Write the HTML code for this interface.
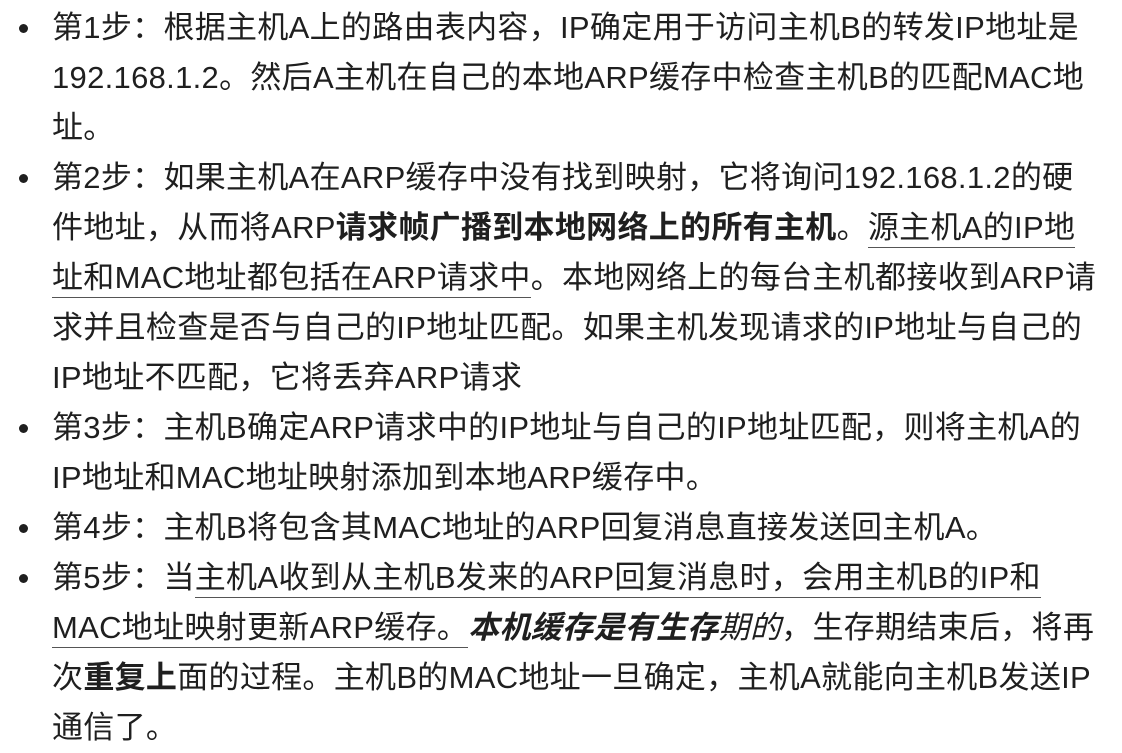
<!DOCTYPE html>
<html><head><meta charset="utf-8"><style>
body{margin:0;width:1122px;height:753px;background:#fff;overflow:hidden;position:relative;
font-family:"Liberation Sans","Noto Sans CJK SC",sans-serif;font-size:31px;letter-spacing:0.3px;color:#1f1f1f}
.l{position:absolute;left:52px;height:50px;line-height:50px;white-space:nowrap}
.b{position:absolute;left:19px;width:9px;height:9px;border-radius:50%;background:#1f1f1f}
u{text-decoration:none;border-bottom:1.5px solid #555;padding-bottom:2px}
b{font-weight:bold}
</style></head><body>
<div class="b" style="top:24px"></div>
<div class="l" style="top:3px">第1步：根据主机A上的路由表内容，IP确定用于访问主机B的转发IP地址是</div>
<div class="l" style="top:53px">192.168.1.2。然后A主机在自己的本地ARP缓存中检查主机B的匹配MAC地</div>
<div class="l" style="top:103px">址。</div>
<div class="b" style="top:174px"></div>
<div class="l" style="top:153px">第2步：如果主机A在ARP缓存中没有找到映射，它将询问192.168.1.2的硬</div>
<div class="l" style="top:203px">件地址，从而将ARP<b>请求帧广播到本地网络上的所有主机</b>。<u>源主机A的IP地</u></div>
<div class="l" style="top:253px"><u>址和MAC地址都包括在ARP请求中</u>。本地网络上的每台主机都接收到ARP请</div>
<div class="l" style="top:303px">求并且检查是否与自己的IP地址匹配。如果主机发现请求的IP地址与自己的</div>
<div class="l" style="top:353px">IP地址不匹配，它将丢弃ARP请求</div>
<div class="b" style="top:424px"></div>
<div class="l" style="top:403px">第3步：主机B确定ARP请求中的IP地址与自己的IP地址匹配，则将主机A的</div>
<div class="l" style="top:453px">IP地址和MAC地址映射添加到本地ARP缓存中。</div>
<div class="b" style="top:524px"></div>
<div class="l" style="top:503px">第4步：主机B将包含其MAC地址的ARP回复消息直接发送回主机A。</div>
<div class="b" style="top:574px"></div>
<div class="l" style="top:553px">第5步：当<u>主机A收到从主机B发来的ARP回复消息时，会用主机B的IP和</u></div>
<div class="l" style="top:603px"><u>MAC地址映射更新ARP缓存。</u><b><i>本机缓存是有生存</i></b><i>期的</i>，生存期结束后，将再</div>
<div class="l" style="top:653px">次<b>重复上</b>面的过程。主机B的MAC地址一旦确定，主机A就能向主机B发送IP</div>
<div class="l" style="top:703px">通信了。</div>
</body></html>
